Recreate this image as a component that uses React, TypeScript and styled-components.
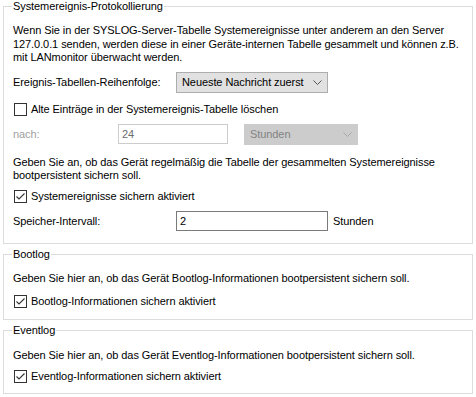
import React from "react";
import styled, { createGlobalStyle } from "styled-components";

const Global = createGlobalStyle`
  html, body { margin: 0; padding: 0; background: #ffffff; }
  body {
    font-family: "Liberation Sans", Arial, sans-serif;
    font-size: 11px;
    letter-spacing: -0.08px;
    color: #000;
  }
`;

const Page = styled.div`
  width: 476px;
  height: 397px;
  box-sizing: border-box;
  padding: 0 3px;
  display: flex;
  flex-direction: column;
  gap: 4px;
`;

const Group = styled.fieldset<{ $h: number }>`
  margin: 0;
  padding: 0 8px 0 9px;
  border: 1px solid #dcdcdc;
  height: ${(p) => p.$h}px;
  box-sizing: border-box;
  display: flex;
  flex-direction: column;
  min-width: 0;
`;

const Legend = styled.legend`
  padding: 0 1px;
  margin-left: -1px;
  line-height: 13px;
  font-size: 11px;
`;

const Para = styled.p<{ $mt: number }>`
  margin: ${(p) => p.$mt}px 0 0 0;
  line-height: 13.5px;
  white-space: nowrap;
`;

const Row = styled.div<{ $mt: number }>`
  display: flex;
  align-items: center;
  margin-top: ${(p) => p.$mt}px;
`;

const Label = styled.span<{ $w: number; $disabled?: boolean }>`
  width: ${(p) => p.$w}px;
  flex: none;
  color: ${(p) => (p.$disabled ? "#a0a0a0" : "#000")};
`;

const Select = styled.div<{ $w: number; $disabled?: boolean }>`
  width: ${(p) => p.$w}px;
  height: 21px;
  box-sizing: border-box;
  border: 1px solid ${(p) => (p.$disabled ? "#cccccc" : "#adadad")};
  background: ${(p) => (p.$disabled ? "#cccccc" : "#e1e1e1")};
  color: ${(p) => (p.$disabled ? "#838383" : "#000")};
  display: flex;
  align-items: center;
  justify-content: space-between;
  padding: 0 5px 0 5px;
`;

const Input = styled.div<{ $w: number; $disabled?: boolean }>`
  width: ${(p) => p.$w}px;
  height: 20px;
  box-sizing: border-box;
  border: 1px solid ${(p) => (p.$disabled ? "#cccccc" : "#7a7a7a")};
  background: #fff;
  color: ${(p) => (p.$disabled ? "#6d6d6d" : "#000")};
  display: flex;
  align-items: center;
  padding: 0 3px;
`;

const Gap = styled.span<{ $w: number }>`
  width: ${(p) => p.$w}px;
  flex: none;
`;

const CheckRow = styled.label<{ $mt: number }>`
  display: flex;
  align-items: center;
  gap: 4px;
  margin-top: ${(p) => p.$mt}px;
  margin-left: 1px;
`;

const Box = styled.span`
  width: 13px;
  height: 13px;
  box-sizing: border-box;
  border: 1px solid #333333;
  background: #fff;
  display: flex;
  align-items: center;
  justify-content: center;
  flex: none;
`;

const Suffix = styled.span`
  margin-left: 5px;
`;

const Chevron = ({ color }: { color: string }) => (
  <svg width="9" height="5" viewBox="0 0 9 5">
    <polyline points="0.5,0.5 4.5,4.5 8.5,0.5" fill="none" stroke={color} strokeWidth="1" />
  </svg>
);

const Check = ({ checked, label, mt }: { checked: boolean; label: string; mt: number }) => (
  <CheckRow $mt={mt}>
    <Box>
      {checked && (
        <svg width="11" height="11" viewBox="0 0 11 11">
          <polyline points="1.5,5.5 4,8 9.5,2.5" fill="none" stroke="#333" strokeWidth="1.1" />
        </svg>
      )}
    </Box>
    <span>{label}</span>
  </CheckRow>
);

export default function App() {
  return (
    <>
      <Global />
      <Page>
        <Group $h={244}>
          <Legend>Systemereignis-Protokollierung</Legend>
          <Para $mt={11}>
            Wenn Sie in der SYSLOG-Server-Tabelle Systemereignisse unter anderem an den Server
            <br />
            127.0.0.1 senden, werden diese in einer Geräte-internen Tabelle gesammelt und können z.B.
            <br />
            mit LANmonitor überwacht werden.
          </Para>
          <Row $mt={7}>
            <Label $w={163}>Ereignis-Tabellen-Reihenfolge:</Label>
            <Select $w={152}>
              <span>Neueste Nachricht zuerst</span>
              <Chevron color="#555" />
            </Select>
          </Row>
          <Check checked={false} label="Alte Einträge in der Systemereignis-Tabelle löschen" mt={10} />
          <Row $mt={8}>
            <Label $w={105} $disabled>nach:</Label>
            <Input $w={110} $disabled>24</Input>
            <Gap $w={16} />
            <Select $w={114} $disabled>
              <span>Stunden</span>
              <Chevron color="#a8a8a8" />
            </Select>
          </Row>
          <Para $mt={11}>
            Geben Sie an, ob das Gerät regelmäßig die Tabelle der gesammelten Systemereignisse
            <br />
            bootpersistent sichern soll.
          </Para>
          <Check checked label="Systemereignisse sichern aktiviert" mt={7} />
          <Row $mt={8}>
            <Label $w={163}>Speicher-Intervall:</Label>
            <Input $w={152}>2</Input>
            <Suffix>Stunden</Suffix>
          </Row>
        </Group>
        <Group $h={72}>
          <Legend>Bootlog</Legend>
          <Para $mt={11}>Geben Sie hier an, ob das Gerät Bootlog-Informationen bootpersistent sichern soll.</Para>
          <Check checked label="Bootlog-Informationen sichern aktiviert" mt={9} />
        </Group>
        <Group $h={70}>
          <Legend>Eventlog</Legend>
          <Para $mt={12}>Geben Sie hier an, ob das Gerät Eventlog-Informationen bootpersistent sichern soll.</Para>
          <Check checked label="Eventlog-Informationen sichern aktiviert" mt={7} />
        </Group>
      </Page>
    </>
  );
}
